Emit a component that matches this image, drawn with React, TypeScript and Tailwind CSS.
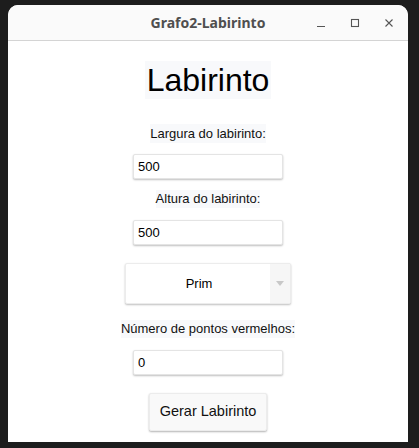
import React, { useState } from 'react';

const WindowControls = () => (
  <div className="flex items-center h-full">
    <svg width="10" height="10" viewBox="0 0 10 10" className="ml-[0px]">
      <path d="M1 8.5 H9" stroke="#555" strokeWidth="1.2" />
    </svg>
    <svg width="10" height="10" viewBox="0 0 10 10" className="ml-[24px]">
      <rect x="1.5" y="1.5" width="7" height="7" fill="none" stroke="#555" strokeWidth="1.1" />
    </svg>
    <svg width="10" height="10" viewBox="0 0 10 10" className="ml-[24px]">
      <path d="M1.5 1.5 L8.5 8.5 M8.5 1.5 L1.5 8.5" stroke="#555" strokeWidth="1.1" />
    </svg>
  </div>
);

const Field = ({ value }: { value: string }) => (
  <input
    defaultValue={value}
    className="w-[150px] h-[25px] bg-white border border-[#e4e4e4] rounded-[2px] shadow-[0_1px_2px_rgba(0,0,0,0.25)] px-[4px] text-[13px] text-black outline-none"
  />
);

const Label = ({ children, className = '' }: { children: React.ReactNode; className?: string }) => (
  <div className={`bg-[#f8f9fb] h-[18px] leading-[18px] text-[13px] text-[#111] ${className}`}>{children}</div>
);

export default function App() {
  const [alg] = useState('Prim');

  return (
    <div
      className="w-[419px] h-[448px] bg-[#1d1d1d] pt-[5px] pl-[8px]"
      style={{ fontFamily: '"Liberation Sans", Arial, sans-serif' }}
    >
      <div className="w-[400px] h-[437px] flex flex-col rounded-t-[10px] overflow-hidden bg-white">
        {/* Title bar */}
        <div className="h-[36px] bg-[#fafafa] border-b border-[#d4d4d4] flex items-center relative">
          <div
            className="flex-1 text-center text-[14px] font-bold text-[#4f4f4f] pl-[0px]"
            style={{ fontFamily: '"Noto Sans", "DejaVu Sans", sans-serif' }}
          >
            Grafo2-Labirinto
          </div>
          <div className="absolute right-[14px] top-0 h-full">
            <WindowControls />
          </div>
        </div>

        {/* Content */}
        <div className="flex-1 flex flex-col items-center">
          <h1 className="mt-[20px] bg-[#f8f9fb] h-[38px] leading-[38px] text-[32px] text-black px-[2px]">
            Labirinto
          </h1>

          <Label className="mt-[25px] h-[19px] leading-[19px]">Largura do labirinto:</Label>
          <div className="mt-[11px]">
            <Field value="500" />
          </div>

          <Label className="mt-[11px]">Altura do labirinto:</Label>
          <div className="mt-[12px]">
            <Field value="500" />
          </div>

          <div className="mt-[18px] w-[166px] h-[41px] flex bg-white border border-[#ececec] rounded-[2px] shadow-[0_1px_2px_rgba(0,0,0,0.25)]">
            <div className="flex-1 flex items-center justify-center text-[13px] text-black pl-[2px]">{alg}</div>
            <div className="w-[20px] bg-[#f6f6f6] flex items-center justify-center">
              <svg width="8" height="5" viewBox="0 0 8 5">
                <path d="M0 0 H8 L4 5 Z" fill="#c8c8c8" />
              </svg>
            </div>
          </div>

          <Label className="mt-[16px]">Número de pontos vermelhos:</Label>
          <div className="mt-[12px]">
            <Field value="0" />
          </div>

          <button className="mt-[18px] w-[118px] h-[38px] bg-[#f9f9f9] border border-[#ececec] rounded-[2px] shadow-[0_1px_2px_rgba(0,0,0,0.3)] text-[14.5px] text-[#111]">
            Gerar Labirinto
          </button>
        </div>
      </div>
    </div>
  );
}
